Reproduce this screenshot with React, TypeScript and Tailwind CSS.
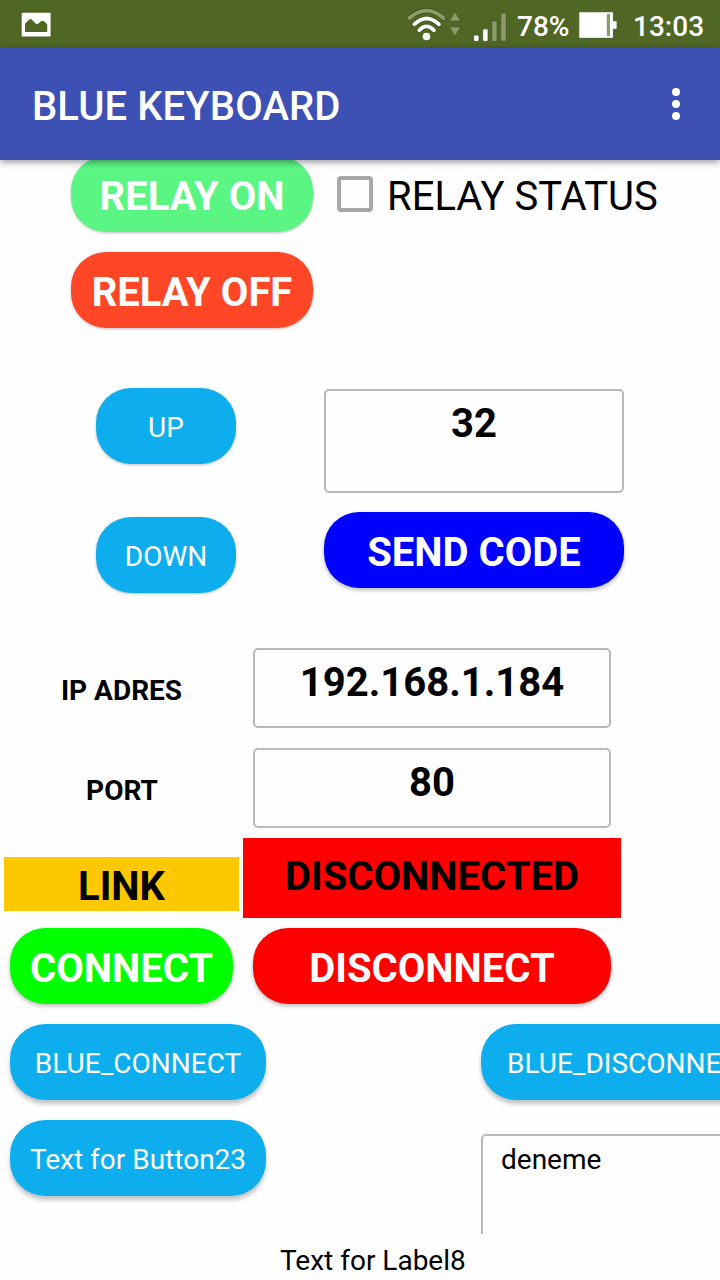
import type { ReactNode } from "react";

function Button({ className, children }: { className: string; children: ReactNode }) {
  return (
    <button
      className={`flex h-[76px] shrink-0 items-center justify-center rounded-[35px] whitespace-nowrap ${className}`}
    >
      {children}
    </button>
  );
}

function Field({ className, children }: { className: string; children: ReactNode }) {
  return (
    <div
      className={`shrink-0 rounded-[5px] border-2 border-[#b8b8b8] text-center text-[40px] leading-[47px] font-bold ${className}`}
    >
      {children}
    </div>
  );
}

const low = "shadow-[0_1px_3px_rgba(0,0,0,0.25)]";
const mid = "shadow-[0_2px_4px_rgba(0,0,0,0.28)]";
const high = "shadow-[0_4px_4px_rgba(0,0,0,0.24)]";
const big = "pt-[5px] text-[40px] font-bold text-white";
const small = "pt-[4px] text-[28px] text-white";

function StatusBar() {
  return (
    <div className="flex h-12 shrink-0 items-center bg-[#4f6624] text-[28px] font-medium text-white">
      <svg className="ml-5 shrink-0" width="32" height="48" viewBox="20 0 32 48">
        <rect x="21.7" y="12.7" width="28.9" height="23.8" rx="1" fill="#fff" />
        <path d="M25 24.5q0-1 1-1.8l3-3q1.5-1.3 3 0l3 3.4q2 2 4 0l2-1.8q1.500-1 3 0l2.500 2.200q.8.8.8 1.800V31q0 1-1 1H26q-1 0-1-1z" fill="#4f6624" />
      </svg>
      <svg className="ml-[352px] shrink-0" width="108" height="48" viewBox="404 0 108 48">
        <g fill="none" strokeLinecap="round">
          <path d="M409.5 18Q426.5 3.3 443.5 18" stroke="#3b4f17" strokeWidth="5.2" />
          <path d="M409.5 18Q426.5 3.3 443.5 18" stroke="#8b9b6c" strokeWidth="3.8" />
          <path d="M414.3 24.3Q426.5 12.5 439 24.3" stroke="#3b4f17" strokeWidth="5.2" />
          <path d="M414.3 24.3Q426.5 12.5 439 24.3" stroke="#fff" strokeWidth="3.8" />
          <path d="M419.3 30.3Q426.5 22.6 434 30.3" stroke="#3b4f17" strokeWidth="5.2" />
          <path d="M419.3 30.3Q426.5 22.6 434 30.3" stroke="#fff" strokeWidth="3.8" />
        </g>
        <circle cx="426.5" cy="36.5" r="3.8" fill="#fff" />
        <path d="M455 12l5.500 9h-11zM449.500 27h11l-5.500 9z" fill="#8b9b6c" stroke="#3f541a" strokeWidth=".5" />
        <g stroke="#3f541a" strokeWidth=".8">
          <rect x="473.6" y="35" width="5.4" height="6.4" rx="1.3" fill="#fff" />
          <rect x="482.7" y="28.8" width="5.4" height="12.6" rx="1.3" fill="#fff" />
          <rect x="491.7" y="21" width="5.4" height="20.4" rx="1.3" fill="#8b9b6c" />
          <rect x="500.7" y="13" width="5.6" height="28.4" rx="1.3" fill="#8b9b6c" />
        </g>
      </svg>
      <span className="ml-[5px] w-[58px] pt-[5px]">78%</span>
      <svg className="shrink-0" width="50" height="48" viewBox="575 0 50 48">
        <path d="M578.8 11.8h34.6v9h3.7v8.5h-3.7v9h-34.6z" fill="#fff" stroke="#3b4f17" strokeWidth=".8" />
        <rect x="606.8" y="14" width="3.2" height="22" fill="#8b9b6c" />
      </svg>
      <span className="ml-2 pt-[5px]">13:03</span>
    </div>
  );
}

export default function App() {
  return (
    <div className="flex h-[1280px] w-[720px] flex-col overflow-hidden bg-[#fefefe] font-[Roboto,sans-serif] text-black">
      <StatusBar />
      <header className="relative z-10 flex h-28 shrink-0 items-center justify-between bg-[#3d51b4] pr-10 pl-8 shadow-[0_2px_7px_rgba(0,0,0,0.42)]">
        <h1 className="pt-[6px] text-[40px] font-medium tracking-[0.1px] text-white">BLUE KEYBOARD</h1>
        <div className="flex flex-col gap-1">
          <i className="size-2 rounded-full bg-white" />
          <i className="size-2 rounded-full bg-white" />
          <i className="size-2 rounded-full bg-white" />
        </div>
      </header>

      <main className="-mt-1 flex h-[1078px] shrink-0 flex-col overflow-hidden">
        <div className="flex shrink-0 items-center pl-[71px]">
          <Button className={`w-[242px] bg-[#5af583] ${big} ${low}`}>RELAY ON</Button>
          <span className="ml-6 size-9 rounded-[4px] border-4 border-[#a8a8a8]" />
          <span className="ml-[14px] pt-[5px] text-[40px] whitespace-nowrap">RELAY STATUS</span>
        </div>
        <div className="mt-5 flex shrink-0 pl-[71px]">
          <Button className={`w-[242px] bg-[#ff4727] ${big} ${low}`}>RELAY OFF</Button>
        </div>

        <div className="mt-[60px] flex shrink-0 gap-[88px] pl-24">
          <div className="flex flex-col gap-[53px]">
            <Button className={`w-[140px] bg-[#0eaeee] ${small} ${low}`}>UP</Button>
            <Button className={`w-[140px] bg-[#0eaeee] ${small} ${low}`}>DOWN</Button>
          </div>
          <div className="flex flex-col gap-[19px] pt-px">
            <Field className="h-[104px] w-[300px] pt-[9px]">32</Field>
            <Button className={`w-[300px] bg-[#0000ff] ${big} ${mid}`}>SEND CODE</Button>
          </div>
        </div>

        <div className="mt-[55px] flex shrink-0 items-center">
          <span className="w-[253px] pt-[6px] pr-[10px] text-center text-[28px] font-bold">IP ADRES</span>
          <Field className="h-20 w-[358px] pt-[9px]">192.168.1.184</Field>
        </div>
        <div className="mt-5 flex shrink-0 items-center">
          <span className="w-[253px] pt-[6px] pr-[9px] text-center text-[28px] font-bold">PORT</span>
          <Field className="h-20 w-[358px] pt-[9px]">80</Field>
        </div>

        <div className="mt-[10px] flex shrink-0 gap-1 pl-1 text-center text-[40px] font-bold">
          <div className="mt-[19px] h-[54px] w-[235px] bg-[#fdc800] pt-[6px] leading-[47px]">LINK</div>
          <div className="h-20 w-[378px] bg-[#ff0000] pt-[15px] leading-[47px]">DISCONNECTED</div>
        </div>

        <div className="mt-[10px] flex shrink-0 gap-5 pl-[10px]">
          <Button className={`w-[223px] bg-[#00ff00] ${big} ${mid}`}>CONNECT</Button>
          <Button className={`w-[358px] bg-[#ff0000] ${big} ${mid}`}>DISCONNECT</Button>
        </div>

        <div className="mt-5 flex shrink-0 gap-[215px] pl-[10px]">
          <div className="flex flex-col gap-5">
            <Button className={`w-[256px] bg-[#0eaeee] ${small} ${high}`}>BLUE_CONNECT</Button>
            <Button className={`w-[256px] bg-[#0eaeee] ${small} ${high}`}>Text for Button23</Button>
          </div>
          <div className="flex flex-col gap-[34px]">
            <Button className={`w-[301px] bg-[#0eaeee] ${small} ${high}`}>BLUE_DISCONNECT</Button>
            <div className="h-[104px] w-[301px] rounded-[5px] border-2 border-[#b8b8b8] pt-[7px] pl-[18px] text-[28px] leading-[33px]">
              deneme
            </div>
          </div>
        </div>
      </main>

      <footer className="pt-[10px] pl-[280px] text-[28px] leading-[33px]">Text for Label8</footer>
    </div>
  );
}
